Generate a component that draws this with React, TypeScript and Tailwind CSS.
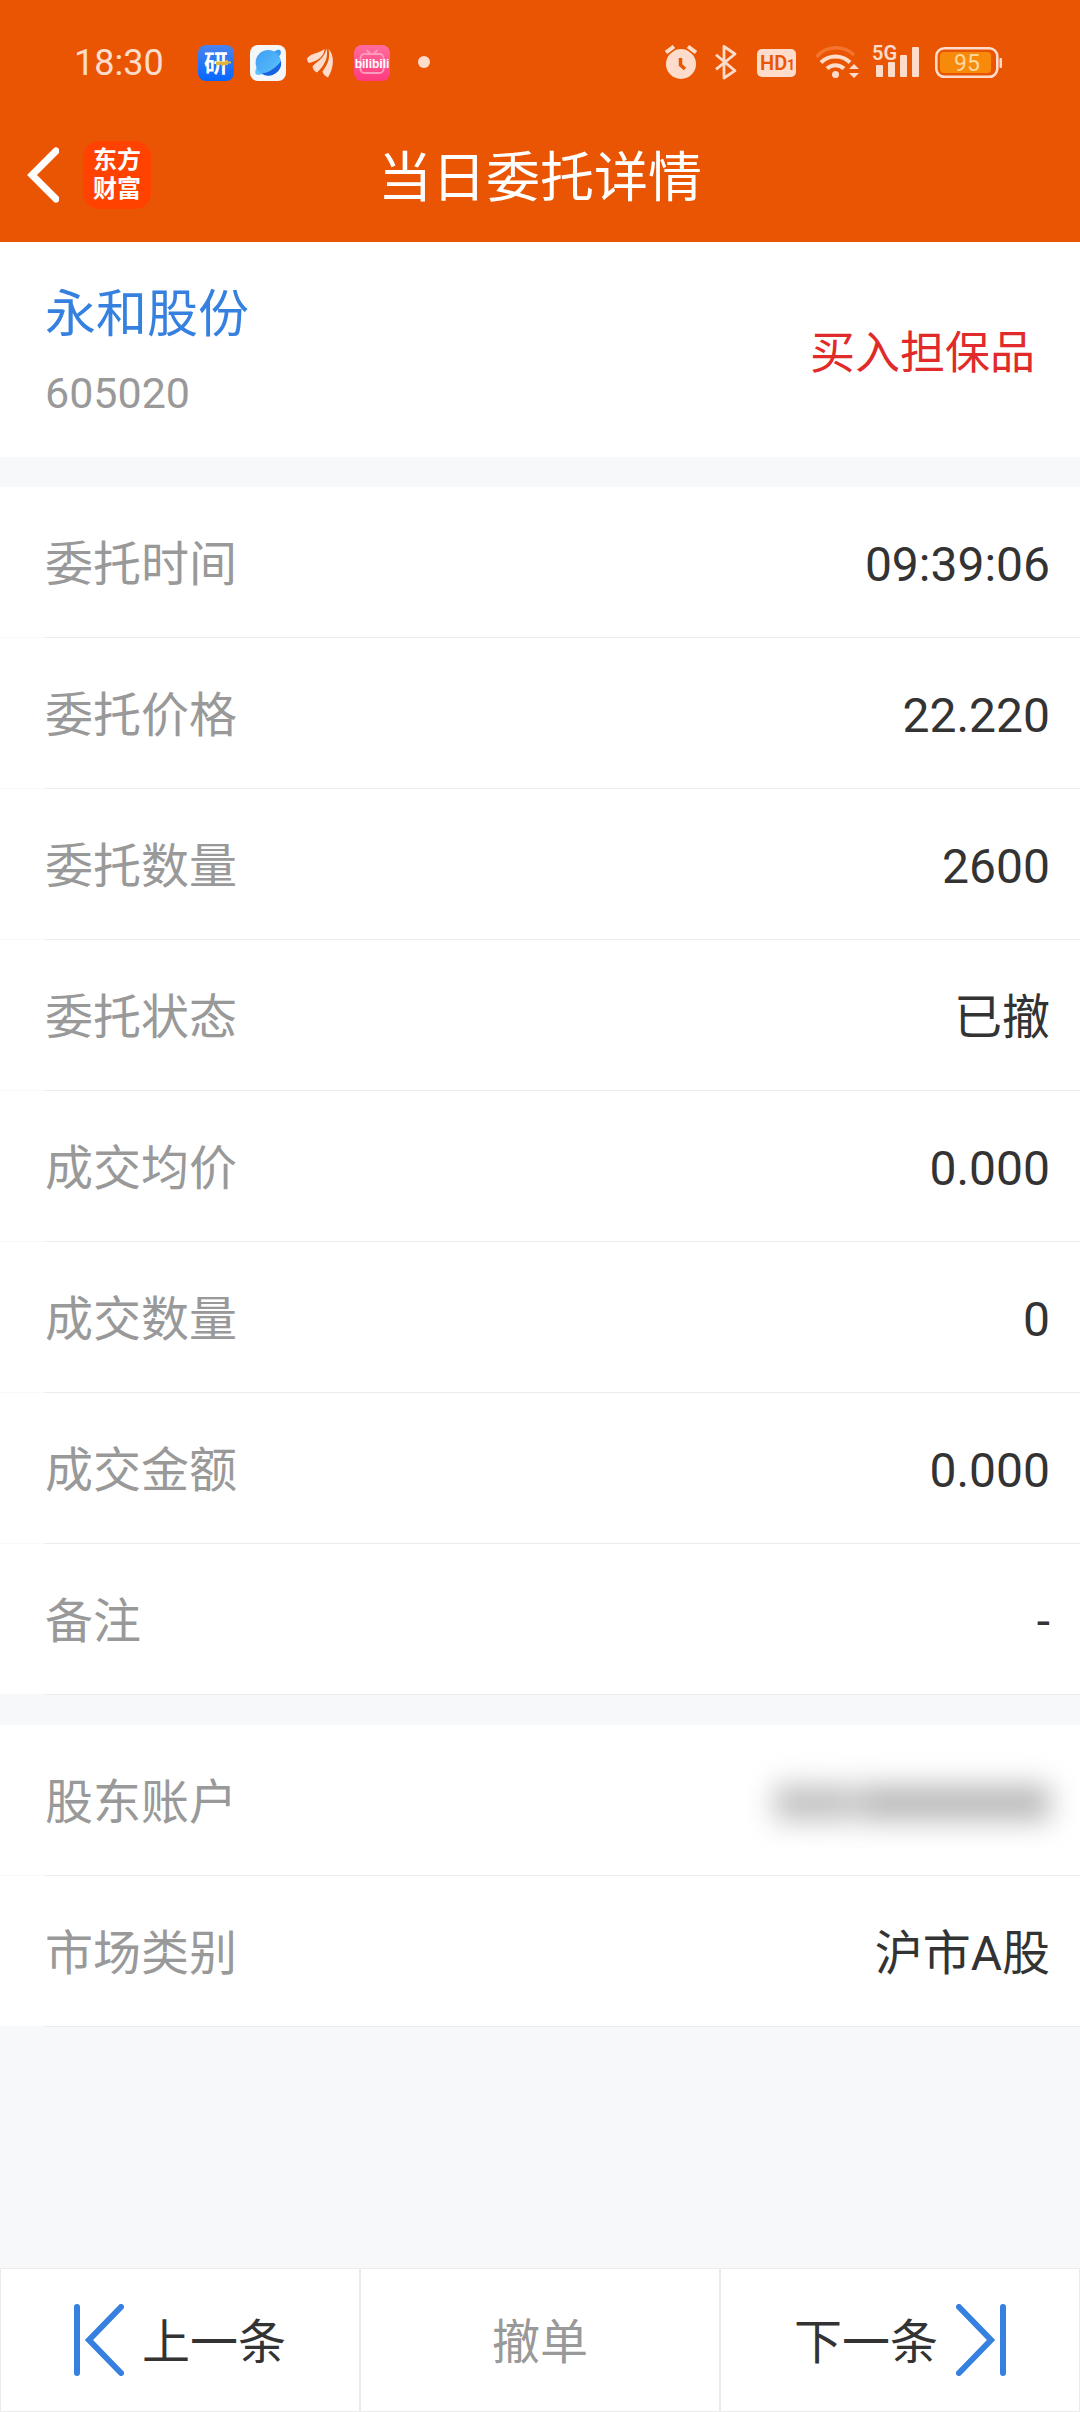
import type { ReactNode } from "react";

type Item = { label: string; value: ReactNode };

const orderItems: Item[] = [
  { label: "委托时间", value: "09:39:06" },
  { label: "委托价格", value: "22.220" },
  { label: "委托数量", value: "2600" },
  { label: "委托状态", value: "已撤" },
  { label: "成交均价", value: "0.000" },
  { label: "成交数量", value: "0" },
  { label: "成交金额", value: "0.000" },
  { label: "备注", value: "-" }
];

const accountItems: Item[] = [
  { label: "股东账户", value: <MaskedValue /> },
  { label: "市场类别", value: "沪市A股" }
];

// account number stays hidden behind a blur
function MaskedValue() {
  return (
    <span className="flex h-9 gap-1 blur-[14px]" aria-label="已隐藏">
      <span className="w-[80px] bg-[#c2c2c2]" />
      <span className="w-[192px] bg-[#bababa]" />
    </span>
  );
}

function NotificationIcons() {
  return (
    <div className="flex items-center gap-4">
      <svg width="36" height="44" viewBox="0 -4 36 44">
        <defs>
          <linearGradient id="yan" x1="0" y1="0" x2="0" y2="1">
            <stop offset="0" stopColor="#4a83ee" />
            <stop offset="1" stopColor="#0667ff" />
          </linearGradient>
        </defs>
        <rect width="36" height="36" rx="8" fill="url(#yan)" />
        <text
          x="18"
          y="27"
          textAnchor="middle"
          fontSize="24"
          fontWeight="700"
          fill="#fff"
          fontFamily="'Noto Sans CJK SC', sans-serif"
        >
          研
        </text>
        <path d="M18 16.500h10v-1.500h2v1.500h3v2h-3v1.500h-4l-2 1.500-1-2-5 1z" fill="#e3b53a" />
      </svg>

      <svg width="36" height="36" viewBox="0 0 36 36">
        <defs>
          <linearGradient id="planet" x1="0" y1="0" x2="1" y2="1">
            <stop offset="0" stopColor="#3f9df5" />
            <stop offset="1" stopColor="#5cc3fb" />
          </linearGradient>
        </defs>
        <rect width="36" height="36" rx="8" fill="#f5f6f7" />
        <path d="M24 6.500C29 3.500 32 4 30.500 9.500L27 14z" fill="#3d9af4" />
        <path d="M7 22C4 27 4.500 31.500 11 29.500l3-2z" fill="#5cc3fb" />
        <circle cx="18.300" cy="17.700" r="12.700" fill="url(#planet)" />
        <path d="M31 16C27 22 19 28 11.500 28.500A12.700 12.700 0 0 0 31 16z" fill="#1762de" />
      </svg>

      <svg width="36" height="36" viewBox="0 0 36 36" fill="#fddccb">
        <path d="M5 13.500C10 7.500 17 8.500 22.500 4 22.500 10 17 16 7 18 5.500 16.500 5 15 5 13.500z" />
        <path d="M24.500 3.500C26.500 11 23.500 20 15 27.500 12.500 26.500 11 24.500 10.500 21.500 14 17 22.500 14 24.500 3.500z" />
        <path d="M26.500 4C32.500 10 32.500 22 26 32.500 23 31 21 29 20.500 26.500 24.500 21 29 14 26.500 4z" />
      </svg>

      <svg width="36" height="36" viewBox="0 0 36 36">
        <defs>
          <linearGradient id="bili" x1="0" y1="0" x2="0" y2="1">
            <stop offset="0" stopColor="#ff6c9d" />
            <stop offset="1" stopColor="#ff3b80" />
          </linearGradient>
        </defs>
        <rect width="36" height="36" rx="8" fill="url(#bili)" />
        <g fill="none" stroke="#ff9cbd" strokeWidth="1.800" strokeLinecap="round">
          <rect x="6.500" y="9" width="23" height="19" rx="4" />
          <path d="M13 5.500l3 3M23 5.500l-3 3" />
        </g>
        <text
          x="18"
          y="23"
          textAnchor="middle"
          fontSize="12"
          fontWeight="700"
          fill="#fff"
          fontFamily="'Liberation Sans', sans-serif"
        >
          bilibili
        </text>
      </svg>

      <svg width="36" height="36" viewBox="0 0 36 36">
        <circle cx="18" cy="17" r="6" fill="#fddccb" />
      </svg>
    </div>
  );
}

function SystemIcons() {
  return (
    <div className="flex items-center gap-3">
      <svg width="34" height="36" viewBox="0 0 34 36" fill="none">
        <circle cx="16" cy="19" r="15" fill="#fddccb" />
        <path d="M1 7.500l8-6M31 7.500l-8-6" stroke="#ea5504" strokeWidth="7" />
        <path d="M1 7.500l8-6M31 7.500l-8-6" stroke="#fddccb" strokeWidth="4" />
        <path d="M15.500 13v7l4.500 4" stroke="#ea5504" strokeWidth="3.500" />
      </svg>

      <svg width="34" height="36" viewBox="0 0 34 36" fill="none">
        <path
          d="M5 9.700l19 16L13 33V1.500L24 9 5 24.300"
          stroke="#fddccb"
          strokeWidth="2.800"
          strokeLinejoin="round"
        />
      </svg>

      <svg width="44" height="36" viewBox="0 0 44 36" fontFamily="Roboto, sans-serif">
        <rect y="4" width="39" height="28" rx="5" fill="#fddccb" />
        <text x="3" y="25" fontSize="20" fontWeight="600" fill="#ea5504">
          HD
        </text>
        <text x="30" y="25" fontSize="14" fontWeight="700" fill="#ea5504">
          1
        </text>
      </svg>

      <svg width="46" height="36" viewBox="0 0 46 36" fill="none">
        <path d="M3.500 12C13 0 31 0 41 10" stroke="#f3742c" strokeWidth="3.500" />
        <path d="M8 17.500c8-8 21-8 29 0" stroke="#fddccb" strokeWidth="4" />
        <path d="M14 23.500c5-4.500 12-4.500 17 0" stroke="#fddccb" strokeWidth="4" />
        <circle cx="22.500" cy="29.500" r="3.500" fill="#fddccb" />
        <path d="M36 24h10l-5-5zM36 28h10l-5 5z" fill="#fddccb" />
      </svg>

      <svg width="52" height="48" viewBox="0 -6 52 48" fill="#fddccb">
        <text x="1" y="15" fontSize="20" fontWeight="600" fontFamily="Roboto, sans-serif">
          5G
        </text>
        <rect x="5" y="20" width="7" height="12" rx="1" />
        <rect x="17" y="17" width="7" height="15" rx="1" />
        <rect x="29" y="10" width="7" height="22" rx="1" />
        <rect x="41" y="2" width="7" height="30" rx="1" />
      </svg>

      <svg width="68" height="36" viewBox="0 0 68 36">
        <rect x="1.300" y="3.300" width="61" height="28.500" rx="8" fill="none" stroke="#fddccb" strokeWidth="2.600" />
        <rect x="5" y="7" width="51" height="21" rx="4" fill="#f88a0b" />
        <rect x="64.500" y="13" width="2.500" height="10" rx="1" fill="#fddccb" />
        <text x="32" y="26" textAnchor="middle" fontSize="23" fontFamily="Roboto, sans-serif" fill="#ffd79c">
          95
        </text>
      </svg>
    </div>
  );
}

function Header() {
  return (
    <header className="bg-[#ea5504] pt-[45px]">
      <div className="flex h-9 items-center justify-between pr-[77px] pl-[74px]">
        <div className="flex items-center gap-[34px]">
          <span className="text-[36px] leading-[44px] text-[#fddccb]">18:30</span>
          <NotificationIcons />
        </div>
        <SystemIcons />
      </div>

      <div className="mt-[26px] grid h-[135px] grid-cols-[1fr_auto_1fr] items-center">
        <div className="flex items-center gap-6 pl-[27px]">
          <button type="button" aria-label="返回">
            <svg width="32" height="56" viewBox="0 0 32 56" fill="none">
              <path d="M29 4L5 28l24 24" stroke="#fff" strokeWidth="7" strokeLinecap="round" />
            </svg>
          </button>
          <div className="flex h-[68px] w-[68px] flex-col items-center justify-center rounded-2xl bg-[#ff4200] text-[24px] leading-[29px] font-bold text-white">
            <span>东方</span>
            <span>财富</span>
          </div>
        </div>
        <h1 className="pt-2 text-[54px] leading-[72px] text-white">当日委托详情</h1>
      </div>
    </header>
  );
}

function DetailList({ items }: { items: Item[] }) {
  return (
    <dl className="bg-white">
      {items.map((item) => (
        <div
          key={item.label}
          className="flex h-[151px] before:w-[45px] before:border-b before:border-[#f8f8f8] before:content-['']"
        >
          <div className="flex flex-1 items-center justify-between border-b border-[#ebebeb] pt-[5px] pr-[30px] text-[48px] leading-[72px]">
            <dt className="text-[#999999]">{item.label}</dt>
            <dd className="text-[#333333]">{item.value}</dd>
          </div>
        </div>
      ))}
    </dl>
  );
}

function StepIcon({ className }: { className?: string }) {
  return (
    <svg
      width="50"
      height="72"
      viewBox="0 0 50 72"
      fill="none"
      stroke="#3681e0"
      strokeWidth="6"
      strokeLinecap="round"
      className={className}
    >
      <path d="M3 3v66M47 3L15 36l32 33" />
    </svg>
  );
}

function Footer() {
  const cell = "flex h-36 items-center justify-center gap-[18px] border border-[#ebebeb]";

  return (
    <footer className="mt-auto grid grid-cols-3 bg-white text-[48px] leading-[72px] text-[#333333]">
      <button type="button" className={cell}>
        <StepIcon />
        <span className="pt-[5px]">上一条</span>
      </button>
      <button type="button" disabled className={`${cell} text-[#999999]`}>
        <span className="pt-[5px]">撤单</span>
      </button>
      <button type="button" className={cell}>
        <span className="pt-[5px]">下一条</span>
        <StepIcon className="rotate-180" />
      </button>
    </footer>
  );
}

export default function App() {
  return (
    <div
      lang="zh-CN"
      className="flex min-h-screen flex-col bg-[#f7f8fa] font-['Roboto','Noto_Sans_CJK_SC',sans-serif]"
    >
      <Header />

      <main className="grid gap-[30px]">
        <section className="flex h-[215px] items-center justify-between bg-white px-[45px] pt-2">
          <div>
            <h2 className="text-[51px] leading-[78px] text-[#3681e0]">永和股份</h2>
            <p className="text-[43px] leading-[78px] text-[#999999]">605020</p>
          </div>
          <span className="text-[45px] leading-[72px] text-[#e12a2a]">买入担保品</span>
        </section>

        <DetailList items={orderItems} />
        <DetailList items={accountItems} />
      </main>

      <Footer />
    </div>
  );
}
